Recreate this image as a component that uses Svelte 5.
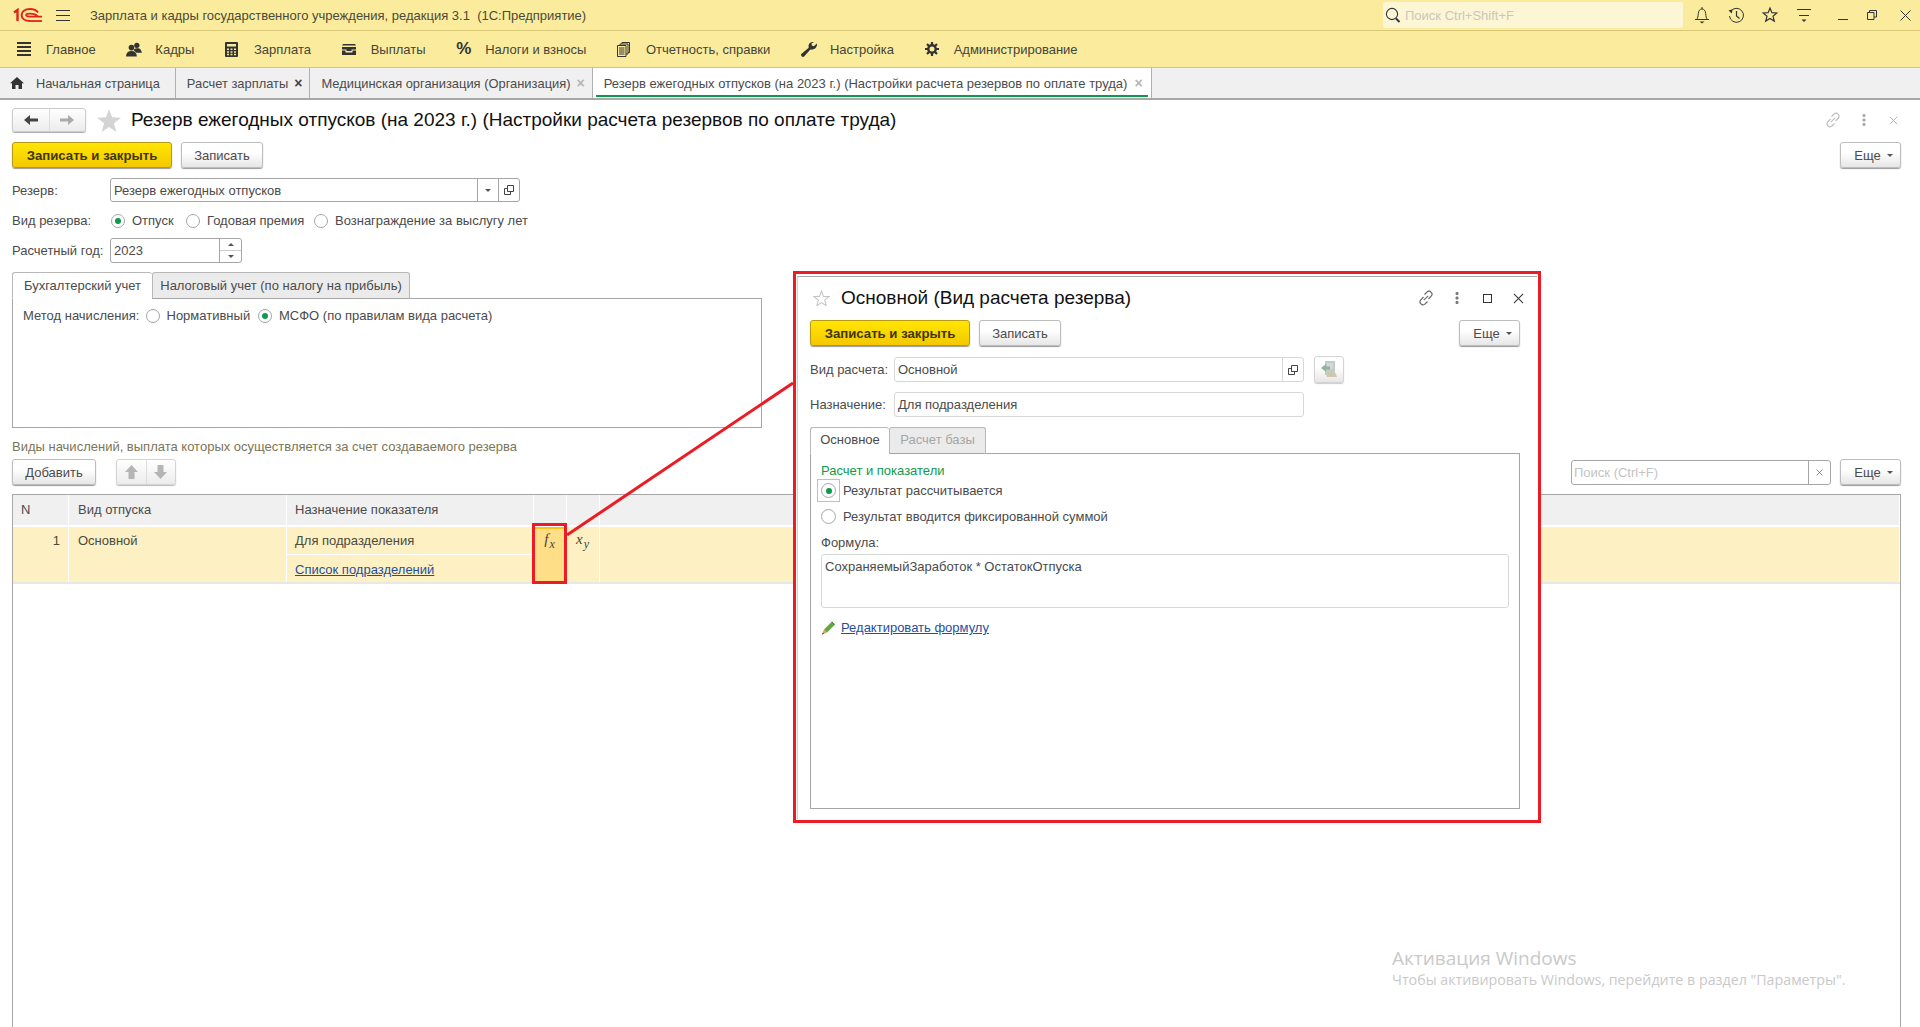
<script>
  const menu = [
    { icon: "lines", label: "Главное" },
    { icon: "people", label: "Кадры" },
    { icon: "calc", label: "Зарплата" },
    { icon: "wallet", label: "Выплаты" },
    { icon: "percent", label: "Налоги и взносы" },
    { icon: "docs", label: "Отчетность, справки" },
    { icon: "wrench", label: "Настройка" },
    { icon: "gear", label: "Администрирование" },
  ];

  const openTabs = [
    { label: "Расчет зарплаты", close: "dark" },
    { label: "Медицинская организация (Организация)", close: "light" },
  ];

  const mainTitle = "Резерв ежегодных отпусков (на 2023 г.) (Настройки расчета резервов по оплате труда)";
</script>

{#snippet esche()}
  <button class="btn more">Еще <i class="caret"></i></button>
{/snippet}

{#snippet linkIcon(color)}
  <svg width="16" height="16" viewBox="0 0 16 16" fill="none" stroke={color} stroke-width="1.1">
    <path d="M6.5 4.5 9 2a2.6 2.6 0 0 1 4 .2 2.6 2.6 0 0 1 .6 3.5L10.5 9" />
    <path d="M9.5 11.5 7 14a2.6 2.6 0 0 1-4-.2 2.6 2.6 0 0 1-.6-3.5L5.5 7" />
    <path d="M5.8 10.2 10.2 5.8" />
  </svg>
{/snippet}

{#snippet dots(color)}
  <svg width="4" height="14" viewBox="0 0 4 14" fill={color}>
    <rect x="0.5" y="1" width="3" height="3" rx="1.2" />
    <rect x="0.5" y="5.5" width="3" height="3" rx="1.2" />
    <rect x="0.5" y="10" width="3" height="3" rx="1.2" />
  </svg>
{/snippet}

{#snippet cross(size, color)}
  <svg width={size} height={size} viewBox="0 0 12 12" fill="none" stroke={color} stroke-width="1.1">
    <path d="M1 1 11 11M11 1 1 11" />
  </svg>
{/snippet}

{#snippet openIcon()}
  <svg width="10" height="10" viewBox="0 0 10 10" fill="none" stroke="#444" stroke-width="1">
    <path d="M3.5 .5h6v6h-6z" />
    <path d="M3.5 3.5H.5v6h6v-3" />
  </svg>
{/snippet}

<div class="page">
  <header class="titlebar">
    <svg class="logo" width="30" height="15" viewBox="0 0 30 15" fill="none" stroke="#e2231a">
      <path d="M1 4.5 4.5 2V13" stroke-width="2.4" />
      <path d="M25 4.5C23.5 2.2 20.5 1 17 1 11.8 1 8.6 3.5 8.6 7S11.8 13 17 13" stroke-width="2" />
      <path d="M25 8.5C23.5 6.8 20.5 5.6 17 5.6 14.5 5.6 13 6.2 13 7S14.5 8.6 17 8.6H29" stroke-width="1.6" />
      <path d="M17 13H29" stroke-width="1.8" />
    </svg>
    <svg class="burger" width="14" height="11" viewBox="0 0 14 11" stroke="#333" stroke-width="1">
      <path d="M0 .5H14M0 5.5H14M0 10.5H14" />
    </svg>
    <span class="app-name">Зарплата и кадры государственного учреждения, редакция 3.1&nbsp; (1С:Предприятие)</span>
    <div class="global-search">
      <svg width="16" height="17" viewBox="0 0 16 17" fill="none" stroke="#333">
        <circle cx="7" cy="7" r="5.6" stroke-width="1.1" />
        <path d="M11 11.5 14.5 15" stroke-width="2" />
      </svg>
      <span>Поиск Ctrl+Shift+F</span>
    </div>
    <div class="sys-icons">
      <svg width="16" height="18" viewBox="0 0 16 18" fill="none" stroke="#333">
        <path d="M2.5 13.5c1.5-1.5 1.5-3 1.8-6C4.6 4.5 6 3 8 3s3.400 1.500 3.700 4.500c.3 3 .3 4.500 1.800 6z" />
        <path d="M8 1v2M1 13.500h14" />
        <path d="M5.500 15.500h5l-2.500 2z" fill="#333" stroke="none" />
      </svg>
      <svg width="16" height="18" viewBox="0 0 16 18" fill="none" stroke="#333">
        <path d="M2.600 5.500A7 7 0 1 1 1.500 10" />
        <path d="M0.500 4.500 4.500 3.200 3.800 7.500z" fill="#333" stroke="none" />
        <path d="M8.500 5v5l3 2.500" stroke-width="1.200" />
      </svg>
      <svg width="16" height="18" viewBox="0 0 16 18" fill="none" stroke="#333" stroke-width="1.200">
        <path d="M8 2l1.900 4.700 5 .3-3.900 3.200 1.300 4.900L8 12.400l-4.300 2.700L5 10.200 1.100 7l5-.3z" />
      </svg>
      <svg width="16" height="18" viewBox="0 0 16 18" fill="none" stroke="#333">
        <path d="M1 3.500H15M3 9.500H13" />
        <path d="M5.500 13.500h5l-2.500 2.500z" fill="#333" stroke="none" />
      </svg>
    </div>
    <div class="win-icons">
      <svg width="10" height="10" viewBox="0 0 10 10" stroke="#333"><path d="M0 9.500H10" /></svg>
      <svg width="10" height="10" viewBox="0 0 10 10" fill="none" stroke="#333">
        <path d="M.5 2.500h6.500v7H.5z" />
        <path d="M2.500 2.500V.5h7v6.500H7" />
      </svg>
      <svg class="win-close" width="11" height="11" viewBox="0 0 11 11" stroke="#333"><path d="M.5 .5 10.500 10.500M10.500 .5 .5 10.500" /></svg>
    </div>
  </header>

  <nav class="menubar">
    {#each menu as m}
      <div class="menu-item">
        <span class="menu-icon">
          {#if m.icon === "lines"}
            <svg width="14" height="14" viewBox="0 0 14 14" fill="#333">
              <rect y="0" width="14" height="2" /><rect y="4" width="14" height="2" /><rect y="8" width="14" height="2" /><rect y="12" width="14" height="2" />
            </svg>
          {:else if m.icon === "people"}
            <svg width="17" height="15" viewBox="0 0 17 15" fill="#333">
              <circle cx="11.500" cy="3" r="2.800" />
              <path d="M8 8c1-2 6-2.500 7.500-.5L17 11h-6z" />
              <circle cx="5.800" cy="5.500" r="3" />
              <path d="M0 15c0-4 2-6 5.800-6s5.700 2 5.700 6z" />
            </svg>
          {:else if m.icon === "calc"}
            <svg width="13" height="15" viewBox="0 0 13 15">
              <rect width="13" height="15" rx="1" fill="#333" />
              <rect x="2" y="2" width="9" height="2.500" fill="#fbec9d" />
              <path d="M2 6.500h2v1.500H2zM5.500 6.500h2v1.500h-2zM9 6.500h2v1.500H9zM2 9.200h2v1.500H2zM5.500 9.200h2v1.500h-2zM9 9.200h2v1.500H9zM2 11.800h2v1.500H2zM5.500 11.800h2v1.500h-2zM9 11.800h2v1.500H9z" fill="#fbec9d" />
            </svg>
          {:else if m.icon === "wallet"}
            <svg width="14" height="11" viewBox="0 0 14 11" fill="#333">
              <path d="M0 1.500 1 0h12l1 1.500z" />
              <path d="M0 3h14v2.500H9.500v1.500h-5V5.500H0zM0 6.500h3.500V8.500h7V6.500H14V11H0z" />
            </svg>
          {:else if m.icon === "percent"}
            <span class="pct">%</span>
          {:else if m.icon === "docs"}
            <svg width="13" height="15" viewBox="0 0 13 15" fill="none" stroke="#333">
              <path d="M.5 3.500h8.500v11H.5zM3 3.500V2h8v10h-2M5 2V.5h7.500v10H11" />
              <path d="M2 6h5.500M2 8h5.500M2 10h5.500M2 12h5.500" />
            </svg>
          {:else if m.icon === "wrench"}
            <svg width="16" height="15" viewBox="0 0 16 15" fill="#333">
              <path d="M16 1.500 12.800 4.200 10.800 3.500 10.500 1.500 13 0C10.500-.5 7.500 1 7.500 4.200c0 .7.100 1 .2 1.500L.3 12c-.6.700-.3 2 .6 2.600.8.600 1.600.5 2.200 0l6.300-7C13 8.300 16.500 5.500 16 1.500z" />
            </svg>
          {:else}
            <svg width="14" height="14" viewBox="0 0 14 14" fill="none" stroke="#333">
              <circle cx="7" cy="7" r="3.700" stroke-width="2.400" />
              <path d="M7 0v3M7 11v3M0 7h3M11 7h3M2 2l2.200 2.200M9.800 9.800 12 12M12 2 9.800 4.200M4.200 9.800 2 12" stroke-width="2.200" />
            </svg>
          {/if}
        </span>
        <span>{m.label}</span>
      </div>
    {/each}
  </nav>

  <div class="tabstrip">
    <div class="wtab home">
      <svg width="14" height="12" viewBox="0 0 14 12" fill="#333">
        <path d="M7 0 14 6.200H12V12H8.500V8h-3v4H2V6.200H0z" />
      </svg>
      <span>Начальная страница</span>
    </div>
    {#each openTabs as t}
      <div class="wtab">
        <span>{t.label}</span>
        <b class="tab-x {t.close}">×</b>
      </div>
    {/each}
    <div class="wtab active">
      <span>{mainTitle}</span>
      <b class="tab-x light">×</b>
    </div>
  </div>

  <main class="form">
    <div class="form-head">
      <div class="nav-btns">
        <span class="nav-btn">
          <svg width="14" height="10" viewBox="0 0 14 10" fill="#444"><path d="M0 5 6 0v3.500h8v3H6V10z" /></svg>
        </span>
        <span class="nav-btn">
          <svg width="14" height="10" viewBox="0 0 14 10" fill="#aaa"><path d="M14 5 8 0v3.500H0v3h8V10z" /></svg>
        </span>
      </div>
      <svg class="big-star" width="24" height="23" viewBox="0 0 24 23" fill="#d4d4d4">
        <path d="M12 0l3 8.300 9 .4-7.100 5.500 2.500 8.800L12 17.900 4.600 23l2.500-8.800L0 8.700l9-.4z" />
      </svg>
      <h1>{mainTitle}</h1>
      <div class="head-tools">
        {@render linkIcon("#bdbdbd")}
        {@render dots("#a8a8a8")}
        {@render cross(9, "#a8a8a8")}
      </div>
    </div>

    <div class="commands">
      <button class="btn primary">Записать и закрыть</button>
      <button class="btn">Записать</button>
      <span class="spacer"></span>
      {@render esche()}
    </div>

    <div class="field first">
      <label for="r1">Резерв:</label>
      <div class="input reserve">
        <span class="value" id="r1">Резерв ежегодных отпусков</span>
        <span class="addon"><i class="caret"></i></span>
        <span class="addon">{@render openIcon()}</span>
      </div>
    </div>

    <div class="field radios">
      <span class="lbl">Вид резерва:</span>
      <span class="radio on"></span><span class="r-text w1">Отпуск</span>
      <span class="radio"></span><span class="r-text w2">Годовая премия</span>
      <span class="radio"></span><span class="r-text">Вознаграждение за выслугу лет</span>
    </div>

    <div class="field year">
      <span class="lbl">Расчетный год:</span>
      <div class="input years">
        <span class="value">2023</span>
        <span class="spin"><i class="up"></i><i class="caret"></i></span>
      </div>
    </div>

    <div class="tabs">
      <div class="tab current">Бухгалтерский учет</div>
      <div class="tab second">Налоговый учет (по налогу на прибыль)</div>
    </div>
    <div class="panel">
      <span class="lbl-inline">Метод начисления:</span>
      <span class="radio"></span><span class="r-text w3">Нормативный</span>
      <span class="radio on"></span><span class="r-text">МСФО (по правилам вида расчета)</span>
    </div>

    <div class="group-title">Виды начислений, выплата которых осуществляется за счет создаваемого резерва</div>

    <div class="table-tools">
      <button class="btn add">Добавить</button>
      <div class="move-btns">
        <span>
          <svg width="13" height="14" viewBox="0 0 13 14" fill="#b5b5b5"><path d="M6.500 0 13 7H9.500v7h-6V7H0z" /></svg>
        </span>
        <span>
          <svg width="13" height="14" viewBox="0 0 13 14" fill="#b5b5b5"><path d="M6.500 14 13 7H9.500V0h-6v7H0z" /></svg>
        </span>
      </div>
      <span class="spacer"></span>
      <div class="input search">
        <span class="value ph">Поиск (Ctrl+F)</span>
        <span class="addon">{@render cross(7, "#555")}</span>
      </div>
      {@render esche()}
    </div>

    <div class="grid">
      <div class="grid-head">
        <div class="c-n">N</div>
        <div class="c-kind">Вид отпуска</div>
        <div class="c-purpose">Назначение показателя</div>
        <div class="c-f"></div>
        <div class="c-f"></div>
        <div class="c-rest"></div>
      </div>
      <div class="grid-row">
        <div class="c-n num">1</div>
        <div class="c-kind">Основной</div>
        <div class="c-purpose split">
          <div>Для подразделения</div>
          <div><span class="link">Список подразделений</span></div>
        </div>
        <div class="c-f formula picked"><span class="math">f<sub>x</sub></span></div>
        <div class="c-f formula"><span class="math">x<sub>y</sub></span></div>
        <div class="c-rest"></div>
      </div>
    </div>

    <svg class="callout" width="240" height="170" viewBox="0 0 240 170">
      <path d="M7 165 233 13" stroke="#ed1c24" stroke-width="3" fill="none" />
    </svg>
    <div class="fx-box"></div>

    <section class="dialog">
      <div class="dialog-in">
        <div class="dlg-head">
          <svg width="17" height="16" viewBox="0 0 24 23" fill="none" stroke="#c4c4c4" stroke-width="1.500">
            <path d="M12 1.500l2.800 7.700 8 .3-6.300 5 2.200 7.900L12 18l-6.700 4.400 2.200-7.900-6.300-5 8-.3z" />
          </svg>
          <h2>Основной (Вид расчета резерва)</h2>
          <div class="dlg-tools">
            {@render linkIcon("#666")}
            {@render dots("#777")}
            <span class="square"></span>
            {@render cross(11, "#333")}
          </div>
        </div>

        <div class="commands dlg-commands">
          <button class="btn primary">Записать и закрыть</button>
          <button class="btn">Записать</button>
          <span class="spacer"></span>
          {@render esche()}
        </div>

        <div class="dlg-field">
          <span class="lbl dlg-lbl">Вид расчета:</span>
          <div class="input soft wide">
            <span class="value">Основной</span>
            <span class="addon">{@render openIcon()}</span>
          </div>
          <button class="btn pic">
            <svg width="16" height="17" viewBox="0 0 16 17">
              <rect x="4" y="0" width="10" height="14" fill="#c3cbc6" />
              <path d="M6 3h6M6 5h6M6 7h6" stroke="#e3e6e3" />
              <path d="M0 7 5 3v2.500h4v3H5V11z" fill="#8fb4a0" />
              <path d="M5 13c1-2 7-3 10 0l1 3H6z" fill="#cfc6ae" />
            </svg>
          </button>
        </div>
        <div class="dlg-field second">
          <span class="lbl dlg-lbl">Назначение:</span>
          <div class="input soft wide"><span class="value">Для подразделения</span></div>
        </div>

        <div class="tabs dlg-tabs">
          <div class="tab current">Основное</div>
          <div class="tab dim">Расчет базы</div>
        </div>
        <div class="dlg-panel">
          <div class="green">Расчет и показатели</div>
          <div class="dlg-radio">
            <span class="focus"><span class="radio on"></span></span>
            <span>Результат рассчитывается</span>
          </div>
          <div class="dlg-radio plain">
            <span class="focus none"><span class="radio"></span></span>
            <span>Результат вводится фиксированной суммой</span>
          </div>
          <div class="formula-lbl">Формула:</div>
          <div class="textarea">СохраняемыйЗаработок * ОстатокОтпуска</div>
          <div class="edit-link">
            <svg width="14" height="14" viewBox="0 0 14 14">
              <path d="M3 8.500 10 1.500l3 3-7 7z" fill="#5fa83c" />
              <path d="M10 1.500l1-1 3 3-1 1z" fill="#3d7f2a" />
              <path d="M3 8.500 1 13.500l5-2z" fill="#c9a36a" />
              <path d="M1.800 11.500 1 13.500l2-.8z" fill="#444" />
            </svg>
            <span class="link">Редактировать формулу</span>
          </div>
        </div>
      </div>
    </section>

    <div class="watermark">
      <div class="wm-big">Активация Windows</div>
      <div class="wm-small">Чтобы активировать Windows, перейдите в раздел "Параметры".</div>
    </div>
  </main>
</div>

<style>
  :global(body) {
    margin: 0;
    background: #fff;
    overflow: hidden;
  }

  .page {
    width: 1920px;
    height: 1027px;
    display: flex;
    flex-direction: column;
    font-family: "Liberation Sans", Arial, sans-serif;
    font-size: 13px;
    color: #4b4b4b;
    overflow: hidden;
  }

  .titlebar {
    height: 30px;
    flex: none;
    display: flex;
    align-items: center;
    background: #fbec9d;
    border-bottom: 1px solid #d8c878;
    padding-left: 13px;
  }
  .burger { margin-left: 13px; }
  .app-name { margin-left: 20px; color: #4a4a3a; }
  .global-search {
    margin-left: auto;
    width: 300px;
    height: 26px;
    box-sizing: border-box;
    padding-left: 2px;
    display: flex;
    align-items: center;
    gap: 4px;
    background: #fdf6d5;
    border-radius: 2px;
    color: #c9c6bb;
  }
  .sys-icons {
    display: flex;
    gap: 18px;
    margin-left: 11px;
  }
  .win-icons {
    display: flex;
    align-items: center;
    gap: 19px;
    margin: 0 9px 0 26px;
  }
  .win-close { margin-left: 4px; }

  .menubar {
    height: 36px;
    flex: none;
    display: flex;
    align-items: center;
    padding-left: 1px;
    background: #fbec9d;
    border-bottom: 1px solid #cfc489;
    color: #44443a;
  }
  .menu-item {
    display: flex;
    align-items: center;
    padding: 0 14.700px 0 16px;
    gap: 13px;
  }
  .menu-icon {
    width: 16px;
    display: flex;
    align-items: center;
  }
  .pct {
    font-size: 17px;
    font-weight: bold;
    color: #333;
  }

  .tabstrip {
    height: 30px;
    flex: none;
    display: flex;
    background: #f0f0f0;
    border-bottom: 2px solid #a8a8a8;
    box-sizing: content-box;
    font-size: 12.900px;
  }
  .wtab {
    display: flex;
    align-items: center;
    gap: 6px;
    padding: 0 7px 0 11px;
    border-right: 1px solid #b0b0b0;
    position: relative;
    color: #4b4b4b;
  }
  .wtab.home { gap: 12px; padding: 0 15px 0 10px; font-size: 12.800px; }
  .wtab.active {
    background: #fff;
    font-size: 13px;
    gap: 7px;
    padding-right: 8px;
  }
  .wtab.active::after {
    content: "";
    position: absolute;
    left: 3px;
    right: 3px;
    bottom: 1px;
    height: 2px;
    background: #0d9a4c;
  }
  .tab-x {
    font-size: 14px;
    line-height: 1;
  }
  .tab-x.dark { color: #444; }
  .tab-x.light { color: #b5b5b5; }

  .form {
    flex: 1;
    position: relative;
    padding: 0 19px 0 12px;
    min-height: 0;
  }
  .form-head {
    height: 24px;
    margin-top: 8px;
    display: flex;
    align-items: center;
  }
  .nav-btns {
    width: 74px;
    height: 24px;
    box-sizing: border-box;
    display: flex;
    border: 1px solid #ccc;
    border-radius: 3px;
    box-shadow: 0 1px 1px #aaa;
    background: linear-gradient(#fff, #ececec);
  }
  .nav-btn {
    flex: 1;
    display: flex;
    align-items: center;
    justify-content: center;
  }
  .nav-btn + .nav-btn { border-left: 1px solid #ddd; }
  .big-star { margin-left: 11px; }
  h1 {
    margin: 0 0 0 10px;
    font-size: 19px;
    font-weight: normal;
    color: #111;
    white-space: nowrap;
  }
  .head-tools {
    margin-left: auto;
    display: flex;
    align-items: center;
    gap: 23px;
    padding-right: 3px;
  }
  .head-tools svg:first-child { margin-right: -2px; }

  .commands {
    display: flex;
    align-items: center;
    gap: 9px;
    margin-top: 10px;
    height: 26px;
  }
  .spacer { flex: 1; }

  .btn {
    height: 26px;
    box-sizing: border-box;
    padding: 0 14px;
    font: inherit;
    color: #4b4b4b;
    border: 1px solid #bdbdbd;
    border-radius: 3px;
    background: linear-gradient(#fff 40%, #e6e6e6);
    box-shadow: 0 1px 1px #999;
    white-space: nowrap;
  }
  .btn.primary {
    width: 160px;
    padding: 0;
    font-weight: bold;
    font-size: 13.200px;
    color: #3f3600;
    border-color: #b59a12;
    background: linear-gradient(#ffe600, #f5c800);
  }
  .commands .btn:nth-child(2) { width: 82px; padding: 0; }
  .btn.more {
    width: 61px;
    padding: 0 0 0 6px;
    display: flex;
    align-items: center;
    justify-content: center;
    gap: 6px;
  }
  .caret {
    display: inline-block;
    width: 0;
    height: 0;
    border: 3px solid transparent;
    border-top: 3px solid #555;
    border-bottom: 0;
  }
  .up {
    display: inline-block;
    width: 0;
    height: 0;
    border: 3px solid transparent;
    border-bottom: 3px solid #555;
    border-top: 0;
  }

  .field {
    display: flex;
    align-items: center;
    height: 24px;
  }
  .field.first { margin-top: 10px; }
  .field.radios { margin-top: 6px; height: 25px; }
  .field.year { margin-top: 5px; height: 25px; }
  .field label, .lbl {
    width: 98px;
    flex: none;
  }

  .input {
    display: flex;
    box-sizing: border-box;
    border: 1px solid #a6a6a6;
    border-radius: 3px;
    background: #fff;
    height: 25px;
    align-items: stretch;
  }
  .input.soft { border-color: #d8d8d8; }
  .value {
    flex: 1;
    padding-left: 3px;
    display: flex;
    align-items: center;
    white-space: nowrap;
  }
  .value.ph { color: #c4c4c4; padding-left: 2px; }
  .addon {
    width: 20px;
    border-left: 1px solid #a6a6a6;
    display: flex;
    align-items: center;
    justify-content: center;
  }
  .soft .addon { border-color: #d8d8d8; }
  .reserve { width: 410px; height: 24px; }
  .years { width: 132px; }
  .spin {
    width: 21px;
    border-left: 1px solid #a6a6a6;
    display: flex;
    flex-direction: column;
    align-items: center;
    justify-content: space-around;
    background: linear-gradient(transparent 49%, #ccc 49%, #ccc 53%, transparent 53%);
  }

  .radio {
    width: 14px;
    height: 14px;
    flex: none;
    box-sizing: border-box;
    border: 1px solid #a6a6a6;
    border-radius: 50%;
    background: #fff;
    position: relative;
    display: inline-block;
  }
  .radio.on::after {
    content: "";
    position: absolute;
    left: 3px;
    top: 3px;
    width: 6px;
    height: 6px;
    border-radius: 50%;
    background: #0d9a4c;
  }
  .field.radios .radio { margin-left: 1px; }
  .r-text { margin-left: 7px; white-space: nowrap; }
  .r-text.w1 { width: 53px; }
  .r-text.w2 { width: 106px; }
  .r-text.w3 { width: 91.500px; }

  .tabs {
    display: flex;
    height: 27px;
    margin-top: 9px;
    position: relative;
    z-index: 1;
  }
  .tab {
    display: flex;
    align-items: center;
    justify-content: center;
    box-sizing: border-box;
    height: 27px;
    border: 1px solid #b8b8b8;
    border-bottom: 1px solid #a6a6a6;
    border-radius: 3px 3px 0 0;
    background: #ebebeb;
  }
  .tab.current {
    width: 140px;
    background: #fff;
    border-bottom-color: #fff;
    border-right: 0;
  }
  .tab.second { width: 258px; }

  .panel {
    width: 750px;
    height: 130px;
    box-sizing: border-box;
    border: 1px solid #a6a6a6;
    margin-top: -1px;
    padding: 10px 0 0 10px;
    display: flex;
    align-items: flex-start;
    line-height: 14px;
  }
  .lbl-inline { width: 122.500px; flex: none; }

  .group-title {
    margin-top: 12px;
    height: 14px;
    line-height: 14px;
    color: #7c7556;
  }

  .table-tools {
    display: flex;
    align-items: center;
    height: 26px;
    margin-top: 5px;
  }
  .btn.add { width: 84px; padding: 0; }
  .move-btns {
    margin-left: 20px;
    width: 60px;
    height: 26px;
    box-sizing: border-box;
    display: flex;
    border: 1px solid #d4d4d4;
    border-radius: 3px;
    box-shadow: 0 1px 1px #bbb;
    background: linear-gradient(#fff, #ececec);
  }
  .move-btns span {
    flex: 1;
    display: flex;
    align-items: center;
    justify-content: center;
  }
  .move-btns span + span { border-left: 1px solid #ddd; }
  .input.search {
    width: 260px;
    margin-right: 9px;
  }
  .search .addon { width: 21px; }

  .grid {
    margin-top: 9px;
    width: 1889px;
    height: 540px;
    box-sizing: border-box;
    border: 1px solid #a6a6a6;
    border-bottom: 0;
  }
  .grid-head, .grid-row {
    display: grid;
    grid-template-columns: 56px 218px 247px 33px 33px 1fr;
    column-gap: 0;
  }
  .grid-head {
    height: 30px;
    background: #f0f0f0;
    align-items: stretch;
  }
  .grid-head > div {
    display: flex;
    align-items: center;
    padding: 0 0 2px 8px;
    box-sizing: border-box;
    border-right: 1px solid #fff;
  }
  .grid-head > .c-kind { padding-left: 9px; }
  .grid-row {
    height: 55px;
    margin-top: 2px;
    background: #fdf1c3;
    border-bottom: 2px solid #e8e8e8;
    box-sizing: content-box;
  }
  .grid-row > div {
    border-right: 1px solid #fff;
    padding: 7px 0 0 8px;
    box-sizing: border-box;
    line-height: 14px;
    color: #4b4b3a;
  }
  .grid-row > .c-kind { padding-left: 9px; }
  .grid-row > .num {
    text-align: right;
    padding: 7px 8px 0 0;
  }
  .grid-row > .split { padding: 0; }
  .split > div {
    height: 27px;
    padding: 7px 0 0 8px;
    box-sizing: border-box;
  }
  .split > div + div { border-top: 1px solid #fff; height: 28px; padding-top: 8px; }
  .link { color: #1f4f9e; text-decoration: underline; }

  .grid-row > .formula { padding: 5px 0 0 0; text-align: center; }
  .grid-row > .picked {
    background: #fedf87;
    border-top: 2px solid #fcc419;
    padding-top: 3px;
  }
  .math {
    font-family: "Liberation Serif", serif;
    font-style: italic;
    font-size: 15px;
    letter-spacing: 1px;
    color: #444;
  }
  .math sub { font-size: 12px; line-height: 0; }

  .callout {
    position: absolute;
    left: 560px;
    top: 270px;
    pointer-events: none;
  }
  .fx-box {
    position: absolute;
    left: 532px;
    top: 423px;
    width: 35px;
    height: 61px;
    box-sizing: border-box;
    border: 3px solid #ed1c24;
  }

  .dialog {
    position: absolute;
    left: 793px;
    top: 171px;
    width: 748px;
    height: 552px;
    box-sizing: border-box;
    border: 3px solid #ed1c24;
    background: #fff;
    padding: 2px 1px 1px;
  }
  .dialog-in {
    height: 100%;
    box-sizing: border-box;
    border-top: 1px solid #a8a8a8;
    border-left: 1px solid #d0d0d0;
    padding: 0 17px 10px 12px;
    display: flex;
    flex-direction: column;
  }
  .dlg-head {
    height: 24px;
    margin-top: 9px;
    display: flex;
    align-items: center;
    padding-left: 3px;
  }
  h2 {
    margin: 0 0 0 11px;
    font-size: 19px;
    font-weight: normal;
    color: #111;
    white-space: nowrap;
  }
  .dlg-tools {
    margin-left: auto;
    display: flex;
    align-items: center;
    gap: 21px;
    margin-right: -4px;
  }
  .square {
    width: 9px;
    height: 9px;
    box-sizing: border-box;
    border: 1px solid #333;
    margin-left: 3.500px;
  }
  .dlg-commands { margin-top: 10px; }
  .dlg-field {
    display: flex;
    align-items: center;
    height: 27px;
    margin-top: 10px;
  }
  .dlg-field.second { margin-top: 8px; }
  .dlg-lbl { width: 84px; }
  .wide { width: 410px; }
  .btn.pic {
    width: 30px;
    height: 27px;
    padding: 0;
    margin-left: 10px;
    border-color: #d4d4d4;
    box-shadow: 0 1px 1px #ccc;
    display: flex;
    align-items: center;
    justify-content: center;
  }

  .dlg-tabs { margin-top: 9px; height: 27px; }
  .dlg-tabs .tab { padding-bottom: 2px; }
  .dlg-tabs .tab.current { width: 79px; }
  .tab.dim { width: 97px; color: #a6a6a6; }
  .dlg-panel {
    flex: 1;
    margin-top: -1px;
    border: 1px solid #a6a6a6;
    padding: 10px 10px 0;
    display: flex;
    flex-direction: column;
  }
  .green { color: #0d9a4c; line-height: 14px; }
  .dlg-radio {
    display: flex;
    align-items: center;
    height: 23px;
    margin-top: 1px;
    margin-left: -4px;
  }
  .dlg-radio.plain { margin-top: 3px; }
  .focus {
    width: 23px;
    height: 23px;
    box-sizing: border-box;
    border: 1px solid #f5c518;
    display: flex;
    align-items: center;
    justify-content: center;
    margin-right: 3px;
  }
  .focus.none { border-color: transparent; }
  .focus .radio { width: 15px; height: 15px; }
  .focus .radio.on::after { left: 3.500px; top: 3.500px; }
  .formula-lbl { margin-top: 8px; line-height: 14px; }
  .textarea {
    width: 688px;
    height: 54px;
    margin-top: 4px;
    box-sizing: border-box;
    border: 1px solid #d8d8d8;
    border-radius: 3px;
    padding: 5px 3px;
    line-height: 14px;
  }
  .edit-link {
    display: flex;
    align-items: center;
    gap: 6px;
    margin-top: 12px;
  }

  .watermark {
    position: absolute;
    left: 1392px;
    top: 846px;
    font-family: "Open Sans", sans-serif;
    color: #c9c9c9;
    pointer-events: none;
  }
  .wm-big { font-size: 19px; line-height: 24px; }
  .wm-small { font-size: 14.250px; line-height: 20px; }
</style>
